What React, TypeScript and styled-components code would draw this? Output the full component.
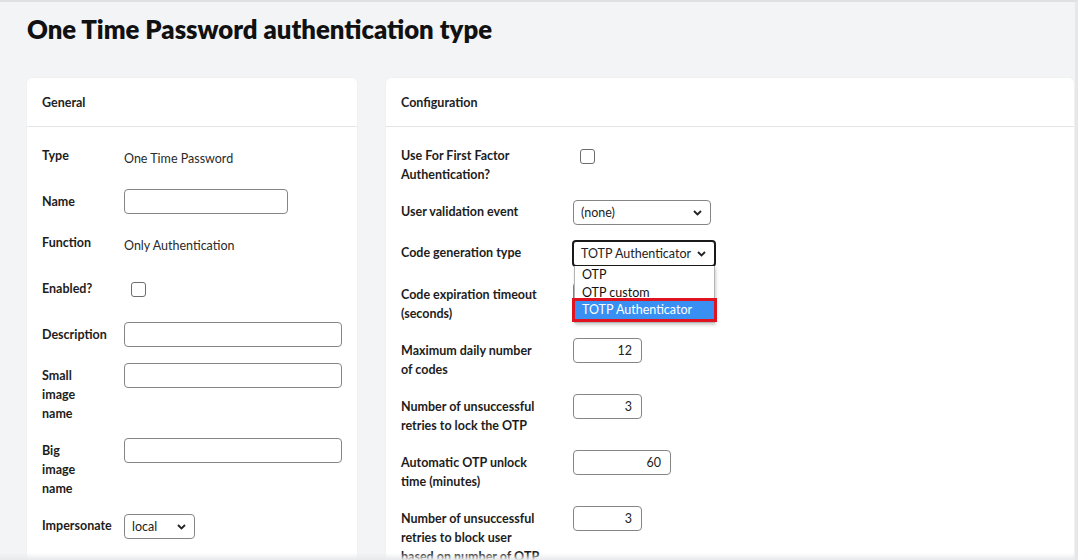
import styled, { createGlobalStyle } from "styled-components";

const GlobalStyle = createGlobalStyle`
  body {
    margin: 0;
    font-family: Lato, "Liberation Sans", sans-serif;
    color: #1d1d1d;
  }
`;

interface FieldDef {
  label: string[];
  tall?: boolean;
  kind: "text" | "input" | "check" | "select";
  value?: string;
  width?: number;
  focused?: boolean;
  numeric?: boolean;
  options?: string[];
}

const generalFields: FieldDef[] = [
  { label: ["Type"], tall: true, kind: "text", value: "One Time Password" },
  { label: ["Name"], kind: "input", width: 164 },
  { label: ["Function"], tall: true, kind: "text", value: "Only Authentication" },
  { label: ["Enabled?"], tall: true, kind: "check" },
  { label: ["Description"], kind: "input", width: 218 },
  { label: ["Small", "image", "name"], kind: "input", width: 218 },
  { label: ["Big", "image", "name"], kind: "input", width: 218 },
  { label: ["Impersonate"], kind: "select", value: "local", width: 71 },
];

// the dropdown of "Code generation type" is open and hides the timeout field
const configFields: FieldDef[] = [
  { label: ["Use For First Factor", "Authentication?"], kind: "check" },
  { label: ["User validation event"], kind: "select", value: "(none)", width: 138 },
  {
    label: ["Code generation type"],
    kind: "select",
    value: "TOTP Authenticator",
    width: 144,
    focused: true,
    options: ["OTP", "OTP custom", "TOTP Authenticator"],
  },
  { label: ["Code expiration timeout", "(seconds)"], kind: "input", width: 69, numeric: true },
  { label: ["Maximum daily number", "of codes"], kind: "input", width: 69, numeric: true, value: "12" },
  { label: ["Number of unsuccessful", "retries to lock the OTP"], kind: "input", width: 69, numeric: true, value: "3" },
  { label: ["Automatic OTP unlock", "time (minutes)"], kind: "input", width: 98, numeric: true, value: "60" },
  {
    label: ["Number of unsuccessful", "retries to block user", "based on number of OTP"],
    kind: "input",
    width: 69,
    numeric: true,
    value: "3",
  },
];

const Chevron = () => (
  <svg width="9" height="6" viewBox="0 0 9 6">
    <polyline points="1,1 4.5,4.5 8,1" fill="none" stroke="#222" strokeWidth="1.8" />
  </svg>
);

function Control({ field }: { field: FieldDef }) {
  if (field.kind === "text") return <Value>{field.value}</Value>;
  if (field.kind === "check") return <CheckBox />;
  if (field.kind === "select") {
    return (
      <SelectWrap>
        <SelectBox $w={field.width ?? 100} $focused={!!field.focused}>
          <span>{field.value}</span>
          <Chevron />
        </SelectBox>
        {field.options && (
          <OptionList>
            {field.options.map((o) => (
              <OptionItem key={o} $active={o === field.value}>
                {o}
              </OptionItem>
            ))}
          </OptionList>
        )}
      </SelectWrap>
    );
  }
  return (
    <TextInput $w={field.width ?? 100} $numeric={!!field.numeric}>
      {field.value}
    </TextInput>
  );
}

function FieldList({ fields, labelWidth }: { fields: FieldDef[]; labelWidth: number }) {
  return (
    <CardBody>
      {fields.map((f, i) => (
        <Row key={i} $labelWidth={labelWidth} $tall={!!f.tall}>
          <Label>
            {f.label.map((line, j) => (
              <div key={j}>{line}</div>
            ))}
          </Label>
          <Control field={f} />
        </Row>
      ))}
    </CardBody>
  );
}

export default function App() {
  return (
    <>
      <GlobalStyle />
      <Page>
        <Title>One Time Password authentication type</Title>
        <Columns>
          <Card>
            <CardHeader>General</CardHeader>
            <FieldList fields={generalFields} labelWidth={82} />
          </Card>
          <Card>
            <CardHeader>Configuration</CardHeader>
            <FieldList fields={configFields} labelWidth={172} />
          </Card>
        </Columns>
      </Page>
    </>
  );
}

const Page = styled.div`
  position: relative;
  height: 560px;
  box-sizing: border-box;
  overflow: hidden;
  background: #f3f4f6;
  border-top: 2px solid #dfe0e2;
  border-right: 3px solid #e6e7e9;
  padding: 0 1px 0 27px;

  &::after {
    content: "";
    position: absolute;
    left: 0;
    right: 0;
    bottom: 0;
    height: 7px;
    background: linear-gradient(to bottom, rgba(235, 236, 238, 0), #e8e9eb);
  }
`;

const Title = styled.h1`
  margin: 12px 0 34px;
  font-size: 25.7px;
  line-height: 30px;
  font-weight: 800;
  color: #111;
`;

const Columns = styled.div`
  display: grid;
  grid-template-columns: 330px 688px;
  gap: 29px;
  align-items: start;
`;

const Card = styled.section`
  background: #fff;
  border-radius: 5px;
  box-shadow: 0 0 2px rgba(0, 0, 0, 0.06);
  min-height: 520px;
`;

const CardHeader = styled.div`
  height: 48px;
  display: flex;
  align-items: center;
  padding: 0 15px;
  border-bottom: 1px solid #e4e5e7;
  font-size: 12.5px;
  font-weight: 700;
  color: #222;
`;

const CardBody = styled.div`
  padding: 17px 15px 0;
`;

const Row = styled.div<{ $labelWidth: number; $tall: boolean }>`
  display: grid;
  grid-template-columns: ${(p) => p.$labelWidth}px 1fr;
  align-items: start;
  min-height: ${(p) => (p.$tall ? 30 : 25)}px;
  padding-bottom: 16px;
`;

const Label = styled.div`
  padding-top: 2px;
  font-size: 12.5px;
  line-height: 19px;
  font-weight: 700;
  white-space: nowrap;
  color: #1d1d1d;
`;

const Value = styled.div`
  padding-top: 5px;
  font-size: 12.5px;
  line-height: 19px;
  color: #2a2a2a;
`;

const CheckBox = styled.div`
  width: 13px;
  height: 13px;
  margin: 5px 0 0 7px;
  border: 1px solid #6d6d6d;
  border-radius: 3px;
  background: #fff;
`;

const TextInput = styled.div<{ $w: number; $numeric: boolean }>`
  box-sizing: border-box;
  width: ${(p) => p.$w}px;
  height: 25px;
  margin-top: -1px;
  border: 1px solid #858585;
  border-radius: 4px;
  padding: 0 9px;
  font-size: 12.5px;
  line-height: 23px;
  text-align: ${(p) => (p.$numeric ? "right" : "left")};
  color: #222;
`;

const SelectWrap = styled.div`
  position: relative;
  width: fit-content;
`;

const SelectBox = styled.div<{ $w: number; $focused: boolean }>`
  box-sizing: border-box;
  width: ${(p) => p.$w}px;
  height: ${(p) => (p.$focused ? 27 : 25)}px;
  margin: ${(p) => (p.$focused ? "-1px 0 0 -1px" : "0")};
  display: flex;
  align-items: center;
  justify-content: space-between;
  padding: 0 8px 0 7px;
  border: ${(p) => (p.$focused ? "2px solid #1a1a1a" : "1px solid #858585")};
  border-radius: 4px;
  font-size: 12.5px;
  color: #222;
  background: #fff;
`;

const OptionList = styled.div`
  position: absolute;
  top: 25px;
  left: 1px;
  width: 141px;
  box-sizing: border-box;
  padding: 0 0 3px;
  background: #fff;
  border: 1px solid #b4b4b4;
  border-top: none;
  box-shadow: 1px 2px 3px rgba(0, 0, 0, 0.2);
  z-index: 5;
`;

const OptionItem = styled.div<{ $active: boolean }>`
  height: 17.5px;
  line-height: 17.5px;
  padding: 0 7px;
  font-size: 12.5px;
  color: ${(p) => (p.$active ? "#fff" : "#111")};
  background: ${(p) => (p.$active ? "#3990f2" : "transparent")};
  outline: ${(p) => (p.$active ? "3px solid #df1420" : "none")};
`;
